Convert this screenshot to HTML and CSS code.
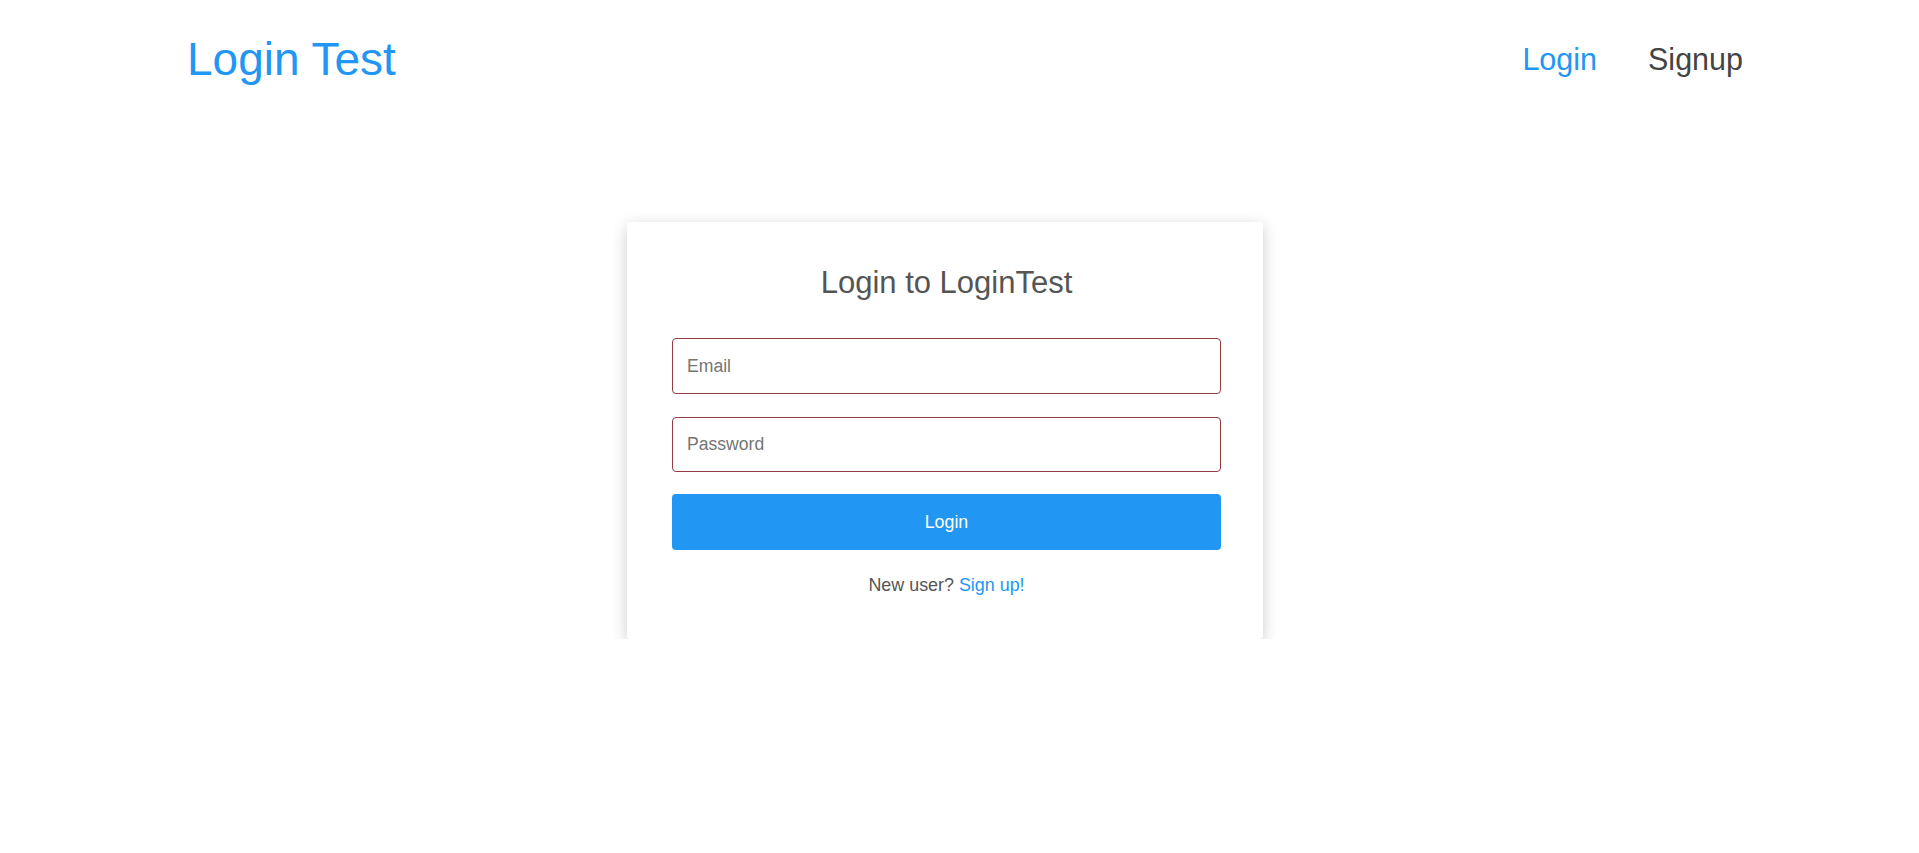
FILE: index.html
```html
<!DOCTYPE html>
<html lang="en">
<head>
<meta charset="utf-8">
<title>Login Test</title>
<link rel="stylesheet" href="styles.css">
</head>
<body>
<header class="topbar">
  <a class="brand" href="#">Login Test</a>
  <nav class="nav">
    <a class="nav-link active" href="#">Login</a>
    <a class="nav-link" href="#">Signup</a>
  </nav>
</header>
<main class="main">
  <section class="card">
    <h1 class="card-title">Login to LoginTest</h1>
    <form class="form">
      <input class="field field-email" type="email" placeholder="Email">
      <input class="field field-password" type="password" placeholder="Password">
      <button class="btn" type="button">Login</button>
    </form>
    <p class="footnote">New user? <a class="link" href="#">Sign up!</a></p>
  </section>
</main>
</body>
</html>
```

FILE: styles.css
```css
* { box-sizing: border-box; }
html, body { margin: 0; padding: 0; background: #fff; }
body { font-family: "Liberation Sans", Arial, sans-serif; color: #444; }
a { text-decoration: none; }

.topbar {
  display: flex;
  align-items: center;
  justify-content: space-between;
  padding: 31px 176px 30px 187px;
}
.brand {
  font-size: 46px;
  line-height: 52px;
  color: #2196f3;
  margin-top: 2px;
}
.nav {
  display: flex;
  gap: 51px;
}
.nav-link {
  font-size: 30.5px;
  line-height: 35px;
  color: #444;
  margin-top: 2px;
}
.nav-link.active { color: #2196f3; }

.main {
  display: flex;
  justify-content: center;
  padding: 107px 29px 0 0;
}
.card {
  width: 636px;
  background: #fff;
  border-radius: 3px;
  box-shadow: 0 4px 16px rgba(0, 0, 0, 0.2);
  padding: 43px 42px 44px 45px;
}
.card-title {
  margin: 0 0 38px;
  font-weight: normal;
  font-size: 31px;
  line-height: 35px;
  text-align: center;
  color: #555;
}
.form {
  display: flex;
  flex-direction: column;
  gap: 23px;
}
.field {
  display: block;
  width: 100%;
  height: 56px;
  padding: 0 14px;
  border: 1px solid #933a42;
  border-radius: 4px;
  font-family: "Liberation Sans", Arial, sans-serif;
  font-size: 17.6px;
  color: #333;
  background: #fff;
  outline: none;
}
.field-password { height: 55px; }
.field::placeholder { color: #757575; }
.btn {
  display: block;
  width: 100%;
  height: 56px;
  margin-top: -1px;
  border: none;
  border-radius: 4px;
  background: #2196f3;
  color: #fff;
  font-family: "Liberation Sans", Arial, sans-serif;
  font-size: 17.8px;
  cursor: pointer;
}
.footnote {
  margin: 25px 0 0;
  text-align: center;
  font-size: 17.9px;
  line-height: 20px;
  color: #555;
}
.link { color: #2196f3; }
```
